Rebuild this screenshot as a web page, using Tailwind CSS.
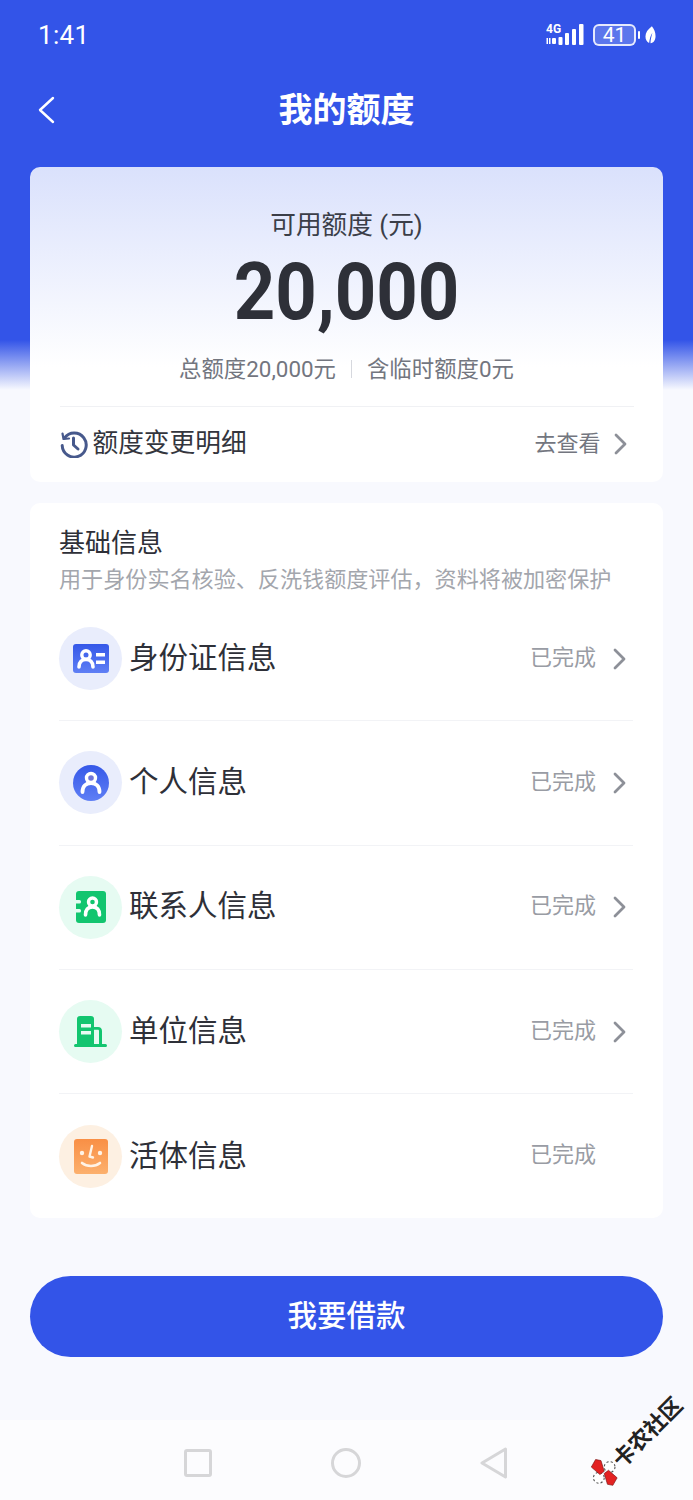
<!DOCTYPE html>
<html>
<head>
  <meta charset="UTF-8">
  <meta name="viewport" content="width=device-width, initial-scale=1.0">
  <script src="https://cdn.jsdelivr.net/npm/@tailwindcss/browser@4"></script>
</head>

<body class="font-['Roboto','Noto_Sans_CJK_SC',sans-serif]">
  <div class="relative w-[693px] h-[1500px] overflow-hidden bg-[#f8f9fe]">
    <!-- blue header background -->
    <div class="absolute top-0 left-0 w-full h-[390px] bg-[linear-gradient(to_bottom,#3354e8_0,#3354e8_340px,#f8f9fe_390px)]"></div>
    <div class="absolute bottom-0 left-0 w-full h-[80px] bg-[#fcfcfe]"></div>

    <div class="relative flex flex-col h-full">
      <!-- status bar -->
      <div class="h-[70px] pl-[38px] pr-[37px] flex items-center justify-between text-white">
        <span class="text-[26px] leading-none font-normal tracking-[0.300px]">1:41</span>
        <div class="flex items-center">
          <svg width="40" height="24" viewBox="0 0 40 24" fill="#fff">
            <text x="0" y="10" font-size="12" font-weight="700" font-family="Roboto">4G</text>
            <rect x="0.500" y="15" width="1.500" height="6"/><rect x="3" y="15" width="1.500" height="6"/>
            <rect x="6" y="15" width="4" height="6" rx="1"/>
            <rect x="12.500" y="14" width="4" height="8" rx="1"/><rect x="19" y="10" width="4" height="12" rx="1"/>
            <rect x="26" y="6" width="4" height="16" rx="1"/><rect x="33" y="1" width="4.500" height="21" rx="1"/>
          </svg>
          <div class="ml-[7px] w-[43px] h-[22px] rounded-[6px] border-2 border-white/85 bg-white/20 flex items-center justify-center text-[21px] leading-none">41</div>
          <div class="ml-[2px] w-[2px] h-[8px] bg-white rounded-full"></div>
          <svg class="ml-[5px]" width="11" height="18" viewBox="0 0 12 19" fill="#fff"><path d="M7.500 0C3 3.500 0.500 7 0.500 11c0 3.500 1.600 6 4 7.200C5 14 6 10 8 7c-1 4-2 8-2 11.500C9.500 18 11.500 15 11.500 10.500 11.500 6.500 10 3 7.500 0z"/></svg>
        </div>
      </div>

      <!-- title bar -->
      <div class="relative h-[80px] flex items-center justify-center">
        <svg class="absolute left-[37px] top-[25px]" width="20" height="30" viewBox="0 0 20 30" fill="none" stroke="#fff" stroke-width="2.400" stroke-linecap="round" stroke-linejoin="round"><path d="M16 3 3 15l13 12"/></svg>
        <h1 class="text-[34px] leading-none font-bold text-white">我的额度</h1>
      </div>

      <!-- quota card -->
      <div class="mx-[30px] mt-[17px] w-[633px] h-[315px] rounded-[10px] bg-[linear-gradient(to_bottom,#dae1fc_0,#ffffff_200px)] flex flex-col items-center">
        <p class="mt-[40px] text-[25.700px] leading-[36px] text-[#3b3e48]">可用额度 (元)</p>
        <p class="mt-[4px] text-[80px] leading-[90px] font-bold text-[#2e3038] scale-x-[0.905]">20,000</p>
        <div class="mt-[17px] flex items-center text-[22.400px] leading-[30px] text-[#73767f]">
          <span>总额度20,000元</span>
          <span class="mx-[15px] w-px h-[18px] bg-[#d6d8de]"></span>
          <span>含临时额度0元</span>
        </div>
        <div class="mt-[22px] w-[574px] border-t border-[#f0f1f4] h-[75px] flex items-center justify-between">
          <div class="flex items-center">
            <svg width="28" height="28" viewBox="0 0 28 28" fill="none" stroke="#47598c" stroke-width="3" stroke-linecap="round" stroke-linejoin="round"><path d="M4.500 8A12 12 0 1 1 2.200 15.500"/><path d="M2.500 3.500 3.500 9 9 8.500" stroke-width="2.200"/><path d="M13.500 8v7l4.500 4"/></svg>
            <span class="ml-[5px] text-[25.700px] leading-none text-[#33353d]">额度变更明细</span>
          </div>
          <div class="flex items-center mr-[7px]">
            <span class="text-[22px] leading-none text-[#73767f]">去查看</span>
            <svg class="ml-[13px]" width="13" height="22" viewBox="0 0 13 22" fill="none" stroke="#8d9098" stroke-width="2.800" stroke-linecap="round" stroke-linejoin="round"><path d="m2 2 9 9-9 9"/></svg>
          </div>
        </div>
      </div>

      <!-- basic info card -->
      <div class="mx-[30px] mt-[21px] w-[633px] h-[715px] rounded-[10px] bg-white px-[29px] pt-[24px]">
        <h2 class="text-[26px] leading-[32px] text-[#2e3038]">基础信息</h2>
        <p class="mt-[5px] text-[22.100px] leading-[30px] whitespace-nowrap text-[#a3a6ad]">用于身份实名核验、反洗钱额度评估，资料将被加密保护</p>

        <div class="mt-[3px] flex flex-col w-[574px]">
          <!-- row -->
          <div class="h-[124.300px] flex items-center border-b border-[#f2f3f6]">
            <div class="w-[63px] h-[63px] rounded-full bg-[#e9edfc] flex items-center justify-center">
              <svg width="36" height="29" viewBox="0 0 36 29"><defs><linearGradient id="b1" x1="0" y1="0" x2="0" y2="1"><stop offset="0" stop-color="#3558e8"/><stop offset="1" stop-color="#5f7ff5"/></linearGradient></defs><rect width="36" height="29" rx="3" fill="url(#b1)"/><circle cx="13" cy="11" r="4.200" fill="none" stroke="#fff" stroke-width="3.400"/><path d="M6 23c0-5 3-7.500 7-7.500s7 2.500 7 7.500" fill="none" stroke="#fff" stroke-width="3.600" stroke-linecap="round"/><rect x="23" y="9" width="9" height="3.500" fill="#fff"/><rect x="23" y="16.500" width="9" height="3.500" fill="#fff"/></svg>
            </div>
            <span class="ml-[7px] text-[29.500px] leading-none text-[#2e3038]">身份证信息</span>
            <span class="ml-auto text-[22px] leading-none text-[#999ca4] -translate-y-px">已完成</span>
            <svg class="ml-[17px] mr-[7px]" width="13" height="22" viewBox="0 0 13 22" fill="none" stroke="#8d9098" stroke-width="2.800" stroke-linecap="round" stroke-linejoin="round"><path d="m2 2 9 9-9 9"/></svg>
          </div>
          <div class="h-[124.300px] flex items-center border-b border-[#f2f3f6]">
            <div class="w-[63px] h-[63px] rounded-full bg-[#e9edfc] flex items-center justify-center">
              <svg width="36" height="36" viewBox="0 0 36 36"><defs><linearGradient id="b2" x1="0" y1="0" x2="0" y2="1"><stop offset="0" stop-color="#3558e8"/><stop offset="1" stop-color="#5f7ff5"/></linearGradient></defs><circle cx="18" cy="18" r="18" fill="url(#b2)"/><circle cx="18" cy="13" r="4.500" fill="#6f74d8" stroke="#fff" stroke-width="3.400"/><path d="M9.500 27c0-6 3.500-9 8.500-9s8.500 3 8.500 9" fill="none" stroke="#fff" stroke-width="3.800" stroke-linecap="round"/></svg>
            </div>
            <span class="ml-[7px] text-[29.500px] leading-none text-[#2e3038]">个人信息</span>
            <span class="ml-auto text-[22px] leading-none text-[#999ca4] -translate-y-px">已完成</span>
            <svg class="ml-[17px] mr-[7px]" width="13" height="22" viewBox="0 0 13 22" fill="none" stroke="#8d9098" stroke-width="2.800" stroke-linecap="round" stroke-linejoin="round"><path d="m2 2 9 9-9 9"/></svg>
          </div>
          <div class="h-[124.300px] flex items-center border-b border-[#f2f3f6]">
            <div class="w-[63px] h-[63px] rounded-full bg-[#e6fbf2] flex items-center justify-center">
              <svg width="30" height="32" viewBox="0 0 30 32"><rect width="30" height="32" rx="3" fill="#12c56f"/><rect x="-1" y="9" width="6" height="3.500" rx="1.500" fill="#e6fbf2"/><rect x="-1" y="18" width="6" height="3.500" rx="1.500" fill="#e6fbf2"/><circle cx="16.500" cy="11" r="4" fill="none" stroke="#fff" stroke-width="3.400"/><path d="M9.500 24c0-5 2.500-8 7-8s7 3 7 8" fill="none" stroke="#fff" stroke-width="3.600" stroke-linecap="round"/></svg>
            </div>
            <span class="ml-[7px] text-[29.500px] leading-none text-[#2e3038]">联系人信息</span>
            <span class="ml-auto text-[22px] leading-none text-[#999ca4] -translate-y-px">已完成</span>
            <svg class="ml-[17px] mr-[7px]" width="13" height="22" viewBox="0 0 13 22" fill="none" stroke="#8d9098" stroke-width="2.800" stroke-linecap="round" stroke-linejoin="round"><path d="m2 2 9 9-9 9"/></svg>
          </div>
          <div class="h-[124.300px] flex items-center border-b border-[#f2f3f6]">
            <div class="w-[63px] h-[63px] rounded-full bg-[#e6fbf2] flex items-center justify-center">
              <svg width="33" height="31" viewBox="0 0 33 31"><path d="M3 3a3 3 0 0 1 3-3h11a3 3 0 0 1 3 3v26H3z" fill="#12c56f"/><rect x="7" y="8" width="10" height="3.500" fill="#e6fbf2"/><rect x="7" y="15" width="10" height="3.500" fill="#e6fbf2"/><path d="M20 11h4c2.500 0 4 1.500 4 4v14h-3V15c0-.8-.4-1.200-1.200-1.200H20z" fill="#12c56f"/><rect x="0" y="28" width="33" height="3" rx="1.500" fill="#12c56f"/></svg>
            </div>
            <span class="ml-[7px] text-[29.500px] leading-none text-[#2e3038]">单位信息</span>
            <span class="ml-auto text-[22px] leading-none text-[#999ca4] -translate-y-px">已完成</span>
            <svg class="ml-[17px] mr-[7px]" width="13" height="22" viewBox="0 0 13 22" fill="none" stroke="#8d9098" stroke-width="2.800" stroke-linecap="round" stroke-linejoin="round"><path d="m2 2 9 9-9 9"/></svg>
          </div>
          <div class="h-[124.300px] flex items-center">
            <div class="w-[63px] h-[63px] rounded-full bg-[#fdf0e2] flex items-center justify-center">
              <svg width="34" height="35" viewBox="0 0 34 35"><defs><linearGradient id="b3" x1="0" y1="0" x2="0" y2="1"><stop offset="0" stop-color="#f98f45"/><stop offset="1" stop-color="#fcb06d"/></linearGradient></defs><rect width="34" height="35" rx="3" fill="url(#b3)"/><circle cx="8" cy="14" r="2.200" fill="#fff3e6"/><circle cx="26" cy="14" r="2.200" fill="#fff3e6"/><path d="M18 7l-2.500 10.500 3.500 1" fill="none" stroke="#fff3e6" stroke-width="2.400" stroke-linecap="round" stroke-linejoin="round"/><path d="M8 24c5 4 13 4 18 0" fill="none" stroke="#fff3e6" stroke-width="2.600" stroke-linecap="round"/></svg>
            </div>
            <span class="ml-[7px] text-[29.500px] leading-none text-[#2e3038]">活体信息</span>
            <span class="ml-auto mr-[37px] text-[22px] leading-none text-[#999ca4] -translate-y-px">已完成</span>
          </div>
        </div>
      </div>

      <!-- borrow button -->
      <button class="mx-[30px] mt-[58px] w-[633px] h-[81px] rounded-full bg-[#3354e8] text-white text-[29.500px] font-medium">我要借款</button>

      <!-- system nav -->
      <div class="mt-[90px] flex items-center justify-center gap-[119px] pr-[2px]">
        <div class="w-[28px] h-[28px] rounded-[3px] border-[3px] border-[#d6d6d8]"></div>
        <div class="w-[30px] h-[30px] rounded-full border-[3px] border-[#d6d6d8]"></div>
        <svg width="28" height="32" viewBox="0 0 28 32" fill="none" stroke="#d6d6d8" stroke-width="3" stroke-linejoin="round"><path d="M25.500 2 2 16l23.500 14z"/></svg>
      </div>
    </div>

    <!-- watermark -->
    <div class="absolute left-[612px] top-[1444px] w-[100px] h-[50px] flex items-center -rotate-45 origin-bottom-left translate-y-[6px]">
      <svg class="rotate-45 shrink-0" width="28" height="28" viewBox="0 0 26 26"><circle cx="8" cy="18" r="5" fill="#fff" stroke="#555" stroke-dasharray="2 2"/><circle cx="18" cy="8" r="5" fill="#fff" stroke="#555" stroke-dasharray="2 2"/><path d="M1 8 5 1l5 1 3 10-4 3zM25 18l-4 7-5-1-3-10 4-3z" fill="#e32222" stroke="#7a1212" stroke-width=".6"/></svg>
      <span class="ml-[1px] text-[22px] leading-none font-bold text-[#222] whitespace-nowrap font-['Noto_Sans_CJK_SC',sans-serif]">卡农社区</span>
    </div>
  </div>
</body>
</html>
